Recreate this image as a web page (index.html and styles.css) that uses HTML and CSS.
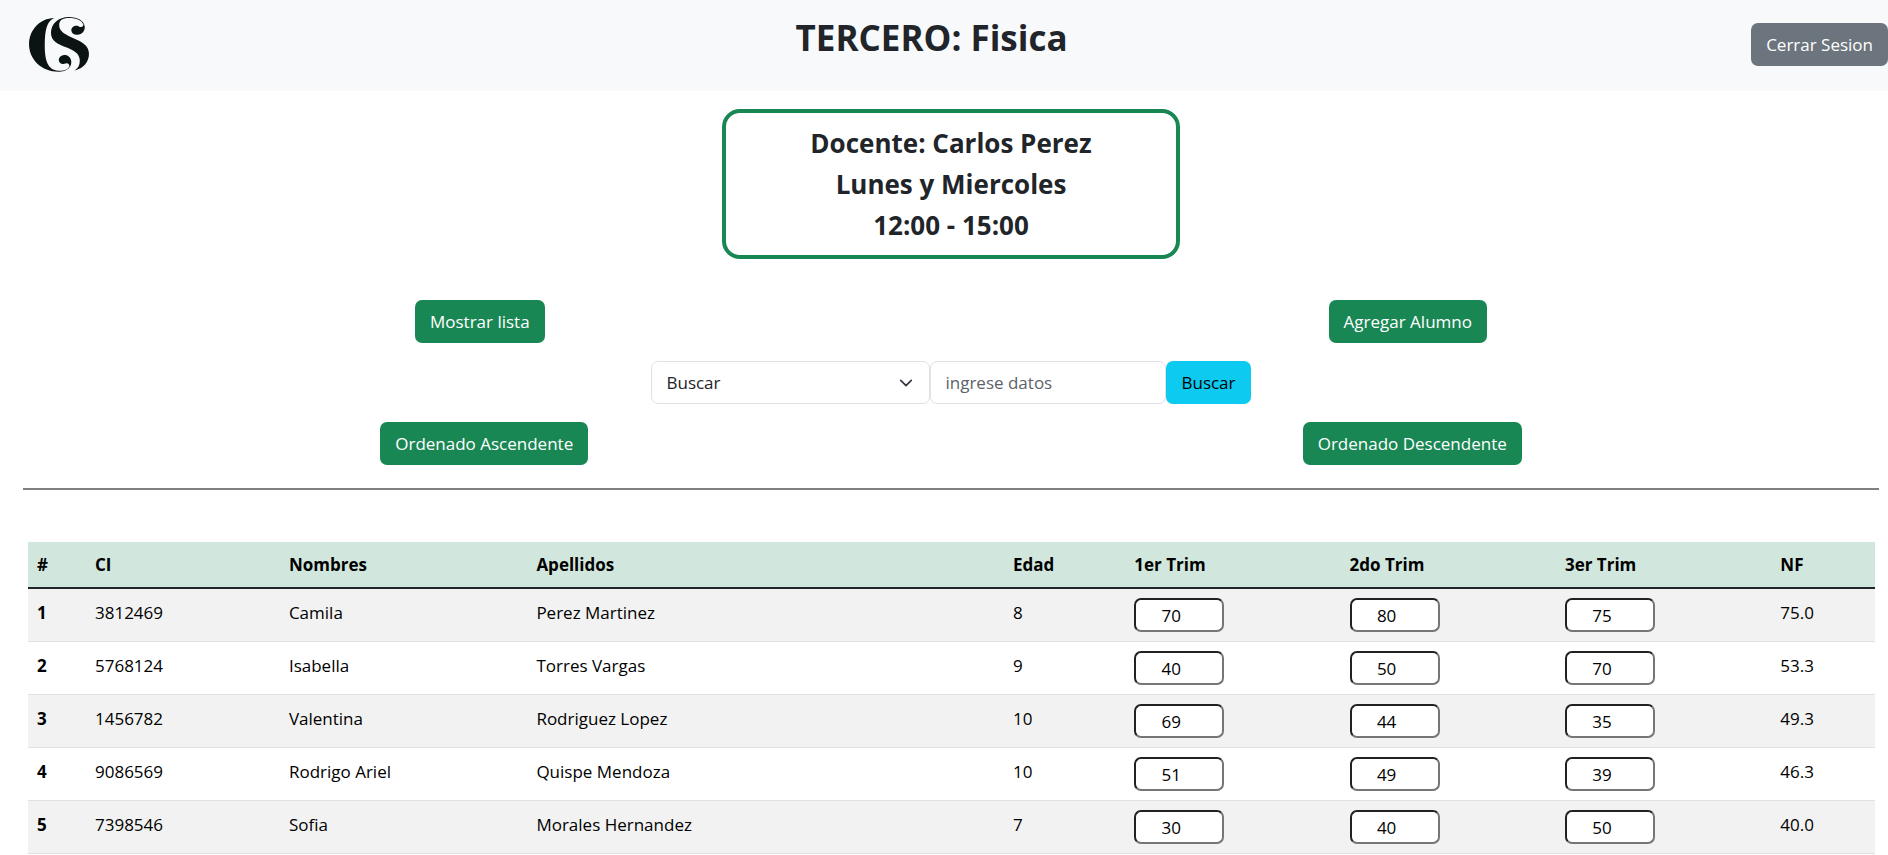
FILE: index.html
```html
<!DOCTYPE html>
<html lang="es">
<head>
<meta charset="utf-8">
<title>TERCERO: Fisica</title>
<link rel="stylesheet" href="styles.css">
</head>
<body>
<header class="topbar">
  <a class="brand" href="#" aria-label="Inicio">
    <svg class="logo" viewBox="84 48 190 174" aria-hidden="true">
      <path d="M163 54C118 55 86 92 86 134C86 180 124 218 176 218C202 218 216 204 215 186C213 173 204 166 193 167C182 168 176 176 177 184C178 192 186 197 194 194C203 189 211 195 209 203C204 213 192 216 176 215C143 213 134 184 134 138C134 92 140 63 163 54Z"/>
      <path d="M208 51C176 51 153 71 153 100C153 150 241 136 241 184C241 198 236 208 225 214C252 209 269 188 269 163C269 112 178 118 178 76C178 61 188 54 208 54C232 54 247 62 252 74C251 82 245 84 237 79C226 75 215 82 215 92C216 101 224 106 234 105C248 104 257 94 256 80C254 62 234 51 208 51Z"/>
    </svg>
  </a>
  <h1 class="title">TERCERO: Fisica</h1>
  <button class="btn btn-secondary" type="button">Cerrar Sesion</button>
</header>
<main class="page">
  <section class="course">
    <p>Docente: Carlos Perez</p>
    <p>Lunes y Miercoles</p>
    <p>12:00 - 15:00</p>
  </section>
  <div class="actions">
    <button class="btn btn-success" type="button">Mostrar lista</button>
    <button class="btn btn-success" type="button">Agregar Alumno</button>
  </div>
  <form class="search">
    <select class="field select" aria-label="Buscar por">
      <option>Buscar</option>
    </select>
    <input class="field query" type="text" placeholder="ingrese datos" aria-label="Datos">
    <button class="btn btn-info" type="button">Buscar</button>
  </form>
  <div class="actions">
    <button class="btn btn-success" type="button">Ordenado Ascendente</button>
    <button class="btn btn-success" type="button">Ordenado Descendente</button>
  </div>
  <hr class="rule">
  <table class="grades">
    <colgroup>
      <col class="c-num"><col class="c-ci"><col class="c-name"><col class="c-last"><col class="c-age"><col class="c-term"><col class="c-term"><col class="c-term"><col class="c-final">
    </colgroup>
    <thead>
      <tr><th scope="col">#</th><th scope="col">CI</th><th scope="col">Nombres</th><th scope="col">Apellidos</th><th scope="col">Edad</th><th scope="col">1er Trim</th><th scope="col">2do Trim</th><th scope="col">3er Trim</th><th scope="col">NF</th></tr>
    </thead>
    <tbody>
      <tr><th scope="row">1</th><td>3812469</td><td>Camila</td><td>Perez Martinez</td><td>8</td><td><input class="grade" type="number" value="70" aria-label="1er Trim, Camila"></td><td><input class="grade" type="number" value="80" aria-label="2do Trim, Camila"></td><td><input class="grade" type="number" value="75" aria-label="3er Trim, Camila"></td><td>75.0</td></tr>
      <tr><th scope="row">2</th><td>5768124</td><td>Isabella</td><td>Torres Vargas</td><td>9</td><td><input class="grade" type="number" value="40" aria-label="1er Trim, Isabella"></td><td><input class="grade" type="number" value="50" aria-label="2do Trim, Isabella"></td><td><input class="grade" type="number" value="70" aria-label="3er Trim, Isabella"></td><td>53.3</td></tr>
      <tr><th scope="row">3</th><td>1456782</td><td>Valentina</td><td>Rodriguez Lopez</td><td>10</td><td><input class="grade" type="number" value="69" aria-label="1er Trim, Valentina"></td><td><input class="grade" type="number" value="44" aria-label="2do Trim, Valentina"></td><td><input class="grade" type="number" value="35" aria-label="3er Trim, Valentina"></td><td>49.3</td></tr>
      <tr><th scope="row">4</th><td>9086569</td><td>Rodrigo Ariel</td><td>Quispe Mendoza</td><td>10</td><td><input class="grade" type="number" value="51" aria-label="1er Trim, Rodrigo Ariel"></td><td><input class="grade" type="number" value="49" aria-label="2do Trim, Rodrigo Ariel"></td><td><input class="grade" type="number" value="39" aria-label="3er Trim, Rodrigo Ariel"></td><td>46.3</td></tr>
      <tr><th scope="row">5</th><td>7398546</td><td>Sofia</td><td>Morales Hernandez</td><td>7</td><td><input class="grade" type="number" value="30" aria-label="1er Trim, Sofia"></td><td><input class="grade" type="number" value="40" aria-label="2do Trim, Sofia"></td><td><input class="grade" type="number" value="50" aria-label="3er Trim, Sofia"></td><td>40.0</td></tr>
    </tbody>
  </table>
</main>
</body>
</html>
```
FILE: styles.css
```css
* {
  box-sizing: border-box;
}

body {
  margin: 0;
  background: #fff;
  color: #212529;
  font: 17px/27px "Segoe UI", "Open Sans", "Noto Sans", sans-serif;
}

.topbar {
  display: flex;
  align-items: center;
  justify-content: space-between;
  padding: 16px 0 18px;
  background: #f8f9fb;
}

.brand {
  width: 112px;
  padding-left: 28px;
}

.logo {
  display: block;
  width: 63px;
  height: 57px;
  fill: #0c1413;
}

.title {
  margin: 0 0 14px;
  font-size: 35px;
  line-height: 43px;
  font-weight: 700;
}

.btn {
  padding: 7px 14px;
  border: 1px solid transparent;
  border-radius: 7px;
  font: inherit;
  white-space: nowrap;
  cursor: pointer;
}

.btn-secondary {
  background: #6c757d;
  color: #fff;
}

.btn-success {
  background: #198754;
  color: #fff;
}

.btn-info {
  background: #0dcaf0;
  color: #000;
}

.page {
  padding: 18px 9px 0 23px;
}

.course {
  width: 458px;
  max-width: 100%;
  margin: 0 auto 41px;
  padding: 10px 9px 9px;
  border: 4px solid #198754;
  border-radius: 18px;
  text-align: center;
  font-size: 26px;
  line-height: 41px;
  font-weight: 700;
}

.course p {
  margin: 0;
}

.actions {
  display: flex;
  justify-content: space-around;
}

.search {
  display: flex;
  justify-content: center;
  margin: 18px 0;
}

.field {
  padding: 7px 14px;
  border: 1px solid #dee2e6;
  border-radius: 7px;
  background: #fff;
  color: #212529;
  font: inherit;
}

.select {
  width: 279px;
  appearance: none;
  background: #fff url("data:image/svg+xml,%3Csvg xmlns='http://www.w3.org/2000/svg' viewBox='0 0 16 16'%3E%3Cpath fill='none' stroke='%23343a40' stroke-linecap='round' stroke-linejoin='round' stroke-width='2' d='m2 5 6 6 6-6'/%3E%3C/svg%3E") no-repeat right 14px center / 18px 14px;
}

.query {
  width: 236px;
}

.query::placeholder {
  color: #5c6269;
  opacity: 1;
}

.rule {
  margin: 23px 0 52px;
  border: 0;
  border-top: 2px solid #808080;
}

.grades {
  width: calc(100% - 9px);
  margin: 0 4px 0 5px;
  border-collapse: collapse;
  table-layout: fixed;
  color: #000;
  text-align: left;
}

.c-num { width: 3.14%; }
.c-ci { width: 10.5%; }
.c-name { width: 13.4%; }
.c-last { width: 25.8%; }
.c-age { width: 6.57%; }
.c-term { width: 11.66%; }

.grades th,
.grades td {
  padding: 9px;
  border-bottom: 1px solid #dee2e6;
  vertical-align: top;
}

.grades td,
.grades tbody th {
  line-height: 30px;
}

.grades thead th {
  line-height: 27px;
  background: #d1e7dd;
  border-bottom: 2px solid #212529;
}

.grades tbody tr:nth-child(odd) {
  background: #f2f2f2;
}

.grade {
  display: block;
  width: 90px;
  height: 34px;
  padding: 1px 3px 1px 2px;
  border: 2px inset #767676;
  border-radius: 7px;
  background: #fff;
  color: #000;
  font: inherit;
  text-align: center;
}
```
